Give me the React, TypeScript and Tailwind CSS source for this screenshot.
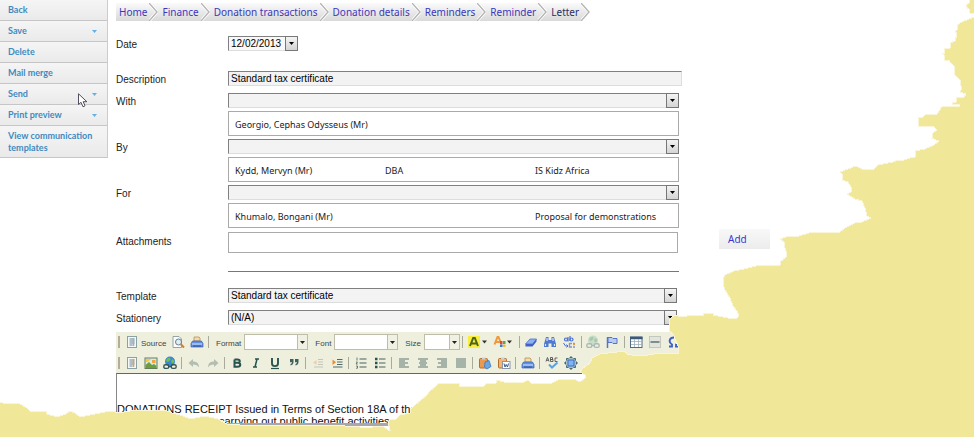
import React from "react";

const menu = [
  { label: "Back", more: false },
  { label: "Save", more: true },
  { label: "Delete", more: false },
  { label: "Mail merge", more: false },
  { label: "Send", more: true },
  { label: "Print preview", more: true },
];

const trail = ["Home", "Finance", "Donation transactions", "Donation details", "Reminders", "Reminder"];

function Chevron({ last = false }: { last?: boolean }) {
  return (
    <svg className="mx-0.5 block h-[18px] w-[9px] shrink-0 last:mr-0" viewBox="0 0 9 18" aria-hidden="true">
      {last && <path d="M0 0 L8 9 L0 18 H9 V0Z" fill="#fff" />}
      <path d="M0 0 L8 9 L0 18" fill="none" stroke="#fff" strokeWidth="3" />
      <path d="M0 0 L8 9 L0 18" fill="none" stroke="#b4b4b4" strokeWidth="1.4" />
    </svg>
  );
}

function ArrowBox() {
  return (
    <span className="pointer-events-none absolute inset-y-0 right-0 flex w-[13px] items-center justify-center border border-[#777] bg-linear-to-b from-[#f4f4f4] to-[#d4d4d4]">
      <svg className="h-[3px] w-[5px]" viewBox="0 0 5 3" aria-hidden="true">
        <path d="M0 0H5L2.5 3Z" fill="#000" />
      </svg>
    </span>
  );
}

function Picker({ id, value = "" }: { id: string; value?: string }) {
  return (
    <span className="relative block h-[15px] w-full">
      <select
        id={id}
        defaultValue={value}
        className="block h-[15px] w-full appearance-none border border-t-[#808080] border-r-[#ccc] border-b-[#ddd] border-l-[#808080] bg-[#f3f3f3] pl-0.5 text-[10px] leading-[13px] text-black"
      >
        <option value={value}>{value}</option>
      </select>
      <ArrowBox />
    </span>
  );
}

function Field({ id, label, children }: { id: string; label: string; children: React.ReactNode }) {
  return (
    <div className="flex">
      <label htmlFor={id} className="w-28 shrink-0 pt-0.5 text-[10px] leading-[13px] text-[#222]">
        {label}
      </label>
      {children}
    </div>
  );
}

function PersonRow({ cells }: { cells: string[] }) {
  return (
    <div className="mt-[3px] grid h-[25px] grid-cols-[150px_150px_1fr] items-center border border-[#aaa] bg-white pt-0.5 pl-1.5 font-['Noto_Sans',sans-serif] text-[9px] leading-3 text-[#222]">
      {cells.map((cell, i) => (
        <span key={i}>{cell}</span>
      ))}
    </div>
  );
}

function PeopleField({ id, label, cells }: { id: string; label: string; cells: string[] }) {
  return (
    <Field id={id} label={label}>
      <div className="max-w-[451px] flex-1">
        <Picker id={id} />
        <PersonRow cells={cells} />
      </div>
    </Field>
  );
}

function Tool({ label, children, wide = false }: { label: string; children: React.ReactNode; wide?: boolean }) {
  return (
    <button
      type="button"
      aria-label={label}
      className={wide ? "flex h-5 w-[26px] shrink-0 items-center justify-center" : "flex h-5 w-[19px] shrink-0 items-center justify-center"}
    >
      <svg className={wide ? "h-3.5 w-[22px]" : "h-3.5 w-3.5"} viewBox={wide ? "0 0 22 14" : "0 0 14 14"} fill="none">
        {children}
      </svg>
    </button>
  );
}

function Sep() {
  return <span className="mx-0.5 h-3 w-px shrink-0 bg-[#a9a99c]" />;
}

function Grip() {
  return <span className="mr-0.5 ml-0.5 h-3 w-0.5 shrink-0 bg-[#b5ad98]" />;
}

function Combo({ label, width }: { label: string; width: string }) {
  return (
    <label className="flex items-center gap-[3px] pl-[5px] text-[8px] leading-3 text-[#444]">
      <span className="pt-1">{label}</span>
      <span className={"relative block h-4 " + width}>
        <select className="block h-4 w-full appearance-none border border-[#bdbda9] bg-white" />
        <span className="pointer-events-none absolute inset-y-0 right-0 flex w-[11px] items-center justify-center border border-[#bdbda9] bg-[#f1f1e3]">
          <svg className="h-[3px] w-[5px]" viewBox="0 0 5 3" aria-hidden="true">
            <path d="M0 0H5L2.5 3Z" fill="#222" />
          </svg>
        </span>
      </span>
    </label>
  );
}

function Printer() {
  return (
    <>
      <path d="M4 6V2H9L10 3V6Z" fill="#f2dcae" stroke="#b78f52" strokeWidth=".8" />
      <path d="M2.500 6H11.500L13 8.500V12H1V8.500Z" fill="#5f8fe0" stroke="#3963b5" strokeWidth=".7" />
      <path d="M2 9H12" stroke="#dbe8ff" />
      <path d="M3 11H11" stroke="#2e4f9e" />
    </>
  );
}

function Doc({ accent }: { accent: string }) {
  return (
    <>
      <rect x="2.5" y="1.5" width="9" height="11" fill="#f4f8f8" stroke="#8ba1a3" />
      <path d="M4.5 4H9.5M4.5 6H9.5M4.5 8H9.5M4.5 10H7.5" stroke="#5c7c88" strokeWidth=".9" />
      <path d="M8.5 3V11" stroke={accent} strokeWidth="1.5" />
    </>
  );
}

function Globe({ tone, land, chain }: { tone: string; land: string; chain: string }) {
  return (
    <>
      <circle cx="7" cy="5.5" r="5" fill={tone} />
      <path d="M4 2.5L7 1.5L7.5 4L5 6L3 5ZM9 3L11.5 5L10 7.5L8 6Z" fill={land} />
      <rect x="0.8" y="8.8" width="5" height="3.6" rx="1.6" stroke={chain} strokeWidth="1.4" />
      <rect x="8.2" y="8.8" width="5" height="3.6" rx="1.6" stroke={chain} strokeWidth="1.4" />
      <path d="M5 10.6H9" stroke={chain} strokeWidth="1.4" />
    </>
  );
}

function Toolbar() {
  return (
    <div className="bg-[#efefde]" role="toolbar" aria-label="Editor">
      <div className="flex h-5 items-center overflow-hidden">
        <Grip />
        <button type="button" className="flex h-5 shrink-0 items-center text-[8px] leading-3 text-[#444]">
          <span className="flex w-[19px] justify-center">
            <svg className="h-3.5 w-3.5" viewBox="0 0 14 14" fill="none" aria-hidden="true">
              <Doc accent="#9db4b8" />
            </svg>
          </span>
          <span className="w-[27px] pt-1 text-left">Source</span>
        </button>
        <Tool label="Preview">
          <path d="M2 1.5H8L10.5 4V12.5H2Z" fill="#fbfdfd" stroke="#93a5a8" />
          <circle cx="7.5" cy="7" r="3" fill="#dfeef5" stroke="#68808c" />
          <path d="M9.8 9.3L13 12.5" stroke="#c9803a" strokeWidth="2" />
        </Tool>
        <Tool label="Print">
          <Printer />
        </Tool>
        <Sep />
        <Combo label="Format" width="w-16" />
        <span className="w-0.5 shrink-0" />
        <Combo label="Font" width="w-16" />
        <span className="w-0.5 shrink-0" />
        <Combo label="Size" width="w-9" />
        <Sep />
        <Tool label="Background colour" wide>
          <rect x="1" y="1" width="12" height="12" fill="#f8ee3c" />
          <path d="M3 11L6.2 3H7.8L11 11M4.5 8.5H9.5" stroke="#4d6321" strokeWidth="2" />
          <path d="M15 5.5H20L17.5 8.5Z" fill="#333" />
        </Tool>
        <Tool label="Text colour" wide>
          <path d="M1.5 9.5L4.5 2H5.5L8.5 9.5M3 7H7" stroke="#f0983c" strokeWidth="2" />
          <rect x="7" y="6" width="2.5" height="3" fill="#de4937" />
          <rect x="10" y="6" width="2.5" height="3" fill="#55a843" />
          <rect x="7" y="9.5" width="2.5" height="2.5" fill="#3e72cf" />
          <rect x="10" y="9.5" width="2.5" height="2.5" fill="#e9bd2d" />
          <path d="M14 5.5H19L16.5 8.5Z" fill="#333" />
        </Tool>
        <Sep />
        <Tool label="Remove format">
          <path d="M1.5 9L6 4H12.5L8.5 9Z" fill="#8fb1f2" stroke="#4a6fcf" strokeWidth=".8" />
          <path d="M1.5 9H8.5L12.5 4V6.5L8.5 11.5H1.5Z" fill="#3d63c8" />
        </Tool>
        <Tool label="Find">
          <path d="M3 2H5.5V5H8.5V2H11L13 9V12H8.5V8.500H5.5V12H1V9Z" fill="#5179cf" />
          <path d="M2.5 9V11M4 3V6M10 3V6M11.5 9V11" stroke="#dbe6fc" strokeWidth="1.2" />
        </Tool>
        <Tool label="Replace">
          <circle cx="4" cy="4.5" r="1.5" stroke="#4a6fcf" strokeWidth="1.2" />
          <path d="M6 2V6.5M8 1V6" stroke="#4a6fcf" strokeWidth="1.2" />
          <circle cx="9.5" cy="4.5" r="1.5" stroke="#4a6fcf" strokeWidth="1.2" />
          <path d="M1.5 8L3.5 11H6M4.5 9.5L6 11L4.5 12.5" stroke="#4a6fcf" />
          <path d="M10 8.5H7.5V12H10M11 8.5H13M11 12H13" stroke="#8098d2" strokeWidth="1.4" />
          <path d="M11 9.5H13" stroke="#ec9a3b" strokeWidth="1.5" />
        </Tool>
        <Sep />
        <Tool label="Unlink">
          <Globe tone="#c6dccd" land="#a9c9a5" chain="#adb8b4" />
        </Tool>
        <Tool label="Anchor">
          <path d="M2.5 2V13" stroke="#5674c7" strokeWidth="1.5" />
          <path d="M3 2.5H7L8 3.5H12V8.5H8L7 7.5H3Z" fill="#bacbf3" stroke="#5674c7" />
        </Tool>
        <Sep />
        <Tool label="Table">
          <rect x="1.5" y="2" width="11.5" height="10.5" fill="#fff" stroke="#506b85" />
          <path d="M1 3H13.5" stroke="#395a7c" strokeWidth="2.5" />
          <path d="M2 6.5H13M2 9.5H13M5.5 4V12M9.5 4V12" stroke="#9fb0b8" strokeWidth=".8" />
        </Tool>
        <Tool label="Horizontal line">
          <rect x="1.5" y="1.5" width="11" height="11" fill="#e1e5dc" stroke="#c2c8bf" />
          <path d="M2.5 7H11.5" stroke="#4c5f5f" strokeWidth="1.3" />
        </Tool>
        <Tool label="Special character">
          <path d="M2 11.5H5V9.5C1 7 2.5 2.5 7 2.5S13 7 9 9.5V11.5H12" stroke="#3e61c6" strokeWidth="1.9" />
        </Tool>
      </div>
      <div className="flex h-[21px] items-center overflow-hidden">
        <Grip />
        <Tool label="Templates">
          <Doc accent="#e2a066" />
        </Tool>
        <Tool label="Image">
          <rect x="1" y="2" width="12" height="10.5" fill="#d6eaf0" stroke="#647d5c" />
          <path d="M1.5 12V9L5 6L8 9L10 8L12.5 10V12Z" fill="#6f9d3d" />
          <path d="M2 3H7L4 6H2Z" fill="#f6c844" />
          <rect x="8" y="4" width="3.5" height="3" fill="#efa73e" />
        </Tool>
        <Tool label="Link">
          <Globe tone="#3c86d8" land="#6fc04d" chain="#33565a" />
        </Tool>
        <Sep />
        <Tool label="Undo">
          <path d="M6 3V5.5C10 5.5 12 7.5 12 11.5C10.5 9.3 9 8.5 6 8.5V11L1.5 7Z" fill="#b3bdb2" />
        </Tool>
        <Tool label="Redo">
          <path d="M8 3V5.5C4 5.5 2 7.5 2 11.5C3.5 9.3 5 8.5 8 8.5V11L12.5 7Z" fill="#b3bdb2" />
        </Tool>
        <Sep />
        <Tool label="Bold">
          <path d="M4.5 3.5H7.5C10.5 3.5 10.5 6.8 7.5 6.8H4.5M7.5 6.8C11.2 6.8 11.2 10.7 7.5 10.7H4.5V3.5" stroke="#28534f" strokeWidth="2" />
        </Tool>
        <Tool label="Italic">
          <path d="M6 3H10M4 11H8M8 3L6 11" stroke="#28534f" strokeWidth="1.5" />
        </Tool>
        <Tool label="Underline">
          <path d="M4 2V7.5C4 11 10 11 10 7.5V2" stroke="#28534f" strokeWidth="1.9" />
          <path d="M3 12.5H11" stroke="#28534f" strokeWidth="1.2" />
        </Tool>
        <Tool label="Block quote">
          <path d="M3 3H6.5V6C6.5 8 5.5 9 3.5 9.5V8C4.5 7.5 5 7 5 6.2H3ZM8 3H11.5V6C11.5 8 10.5 9 8.5 9.5V8C9.5 7.5 10 7 10 6.2H8Z" fill="#3d615e" />
        </Tool>
        <Sep />
        <Tool label="Decrease indent">
          <path d="M7 3.5H12M7 6H12M7 8.5H12M3 11H12" stroke="#c1c6bb" />
          <path d="M5.5 4V9L2 6.5Z" fill="#f0cda5" />
        </Tool>
        <Tool label="Increase indent">
          <path d="M7 3.5H12.5M7 6H12.5M7 8.5H12.5M3 11H12.5" stroke="#4f6a68" />
          <path d="M2.5 3.5V9L6 6.2Z" fill="#e98c34" />
        </Tool>
        <Sep />
        <Tool label="Numbered list">
          <path d="M5.5 3H12.5M5.5 7H12.5M5.5 11H12.5" stroke="#47625f" strokeWidth="1.2" />
          <path d="M3 1.5V4.5M2 6H3.5L2 8H3.7M2 10H3.5V12.2H2" stroke="#47625f" strokeWidth=".8" />
        </Tool>
        <Tool label="Bulleted list">
          <path d="M6 3H12.5M6 7H12.5M6 11H12.5" stroke="#47625f" strokeWidth="1.2" />
          <path d="M2 3H4.5M2 7H4.5M2 11H4.5" stroke="#28534f" strokeWidth="2.4" />
        </Tool>
        <Sep />
        <Tool label="Align left">
          <path d="M2 3H12M2 5H8M2 7H11M2 9H8M2 11H12" stroke="#5e7975" strokeWidth="1.2" />
        </Tool>
        <Tool label="Align centre">
          <path d="M2 3H12M4 5H10M3 7H11M4 9H10M2 11H12" stroke="#5e7975" strokeWidth="1.2" />
        </Tool>
        <Tool label="Align right">
          <path d="M2 3H12M6 5H12M3 7H12M6 9H12M2 11H12" stroke="#5e7975" strokeWidth="1.2" />
        </Tool>
        <Tool label="Justify">
          <path d="M2 3H12M2 5H12M2 7H12M2 9H12M2 11H12" stroke="#5e7975" strokeWidth="1.2" />
        </Tool>
        <Sep />
        <Tool label="Paste">
          <rect x="1.5" y="2.5" width="8" height="9.5" rx="1" fill="#e99a4e" stroke="#b56d2c" />
          <path d="M4 1.5H7.5V3.5H4Z" fill="#cbd3d6" />
          <path d="M7 6L11 4.5L13 10.5L9 13L6.5 11Z" fill="#6aa7e2" stroke="#3b79bd" strokeWidth=".8" />
        </Tool>
        <Tool label="Paste from Word">
          <rect x="1.5" y="2.5" width="8" height="9.5" rx="1" fill="#f0b577" stroke="#b56d2c" />
          <path d="M4 1.5H7.5V3.5H4Z" fill="#cbd3d6" />
          <rect x="5.5" y="5.5" width="7.5" height="7" fill="#fff" stroke="#8b97a5" />
          <path d="M7 7.5L8 11L9.2 8.5L10.5 11L11.5 7.5" stroke="#37588f" />
        </Tool>
        <Sep />
        <Tool label="Print page">
          <Printer />
        </Tool>
        <Sep />
        <Tool label="Check spelling">
          <path d="M1 5.5L2.5 1.5L4 5.5M1.5 4.3H3.5M5.5 5.5V1.5H7.5V3.5H5.5H8V5.5H5.5M12.5 2H10V5.5H12.5" stroke="#555" strokeWidth=".9" />
          <path d="M4 8.5L7 11.5L12.5 6.5" stroke="#5aa3de" strokeWidth="2" />
        </Tool>
        <Tool label="Maximise">
          <rect x="2" y="2" width="10" height="10" rx="2" fill="#a9bfc2" />
          <path d="M7 0L9 2H5ZM7 14L9 12H5ZM0 7L2 5V9ZM14 7L12 5V9Z" fill="#456a70" />
          <path d="M2.500 4.500V2.500H4.500M9.500 2.500H11.500V4.500M11.500 9.500V11.500H9.500M4.500 11.500H2.500V9.500" stroke="#456a70" />
          <rect x="4" y="4" width="6" height="6" fill="#7db4f5" stroke="#3a6ec4" />
        </Tool>
      </div>
    </div>
  );
}

const tear =
  "M970 -2V0L969 3L966 5V7L969 9L970 13L974 14V17L969 19L962 22L957 25V30L955 31L957 34L955 41L950 43V48L944 49V53H942L944 55V60H949L950 62L954 66V74L957 77L960 80V84L962 88L960 92L966 94L964 97H957L956 102H952V104H959V106H953L944 106L940 108V110L937 114L925 115L923 117H918V126L934 127L937 130L933 133L932 138H931L939 141L934 145L925 149L915 151V157L910 158L904 160H898L893 162L878 165L874 169H862L856 166L848 169L840 172L842 174V180L848 182L851 187V192L847 194L855 199L862 201L865 208L867 216L871 218L862 222H857L845 228L840 232L809 233L799 236L786 237L780 239L784 242V245L786 251V257L780 262V265L756 266L744 269L734 271L725 275L723 279V284L725 290L730 298L733 306L737 311L739 316L737 318H728L713 315V313H703V315L692 315L682 317L675 315L671 318L669 320V331L673 334L676 341L678 346V353H660L648 355L632 355L627 354L625 351L600 354L592 358L590 363L582 369L580 372L585 375V378L580 382L574 379H566L558 380L552 383H531L528 380L522 383L504 382L497 380L496 383L486 384L484 386H459V383H439L436 386L430 391L427 395L421 400L415 405L411 409L410 413L400 415L396 419H390L388 423L390 430H388L383 426H375L370 428L360 427L345 426L330 425H290L270 425L255 425L240 425L227 424L218 419L205 416L195 418H188L180 415L172 413L165 410H145L130 411L118 413L113 411L105 412L95 414L85 416L80 417L75 413L70 411L66 414L57 417L47 414L46 411H30L27 408L20 404L3 403L-2 402V439H976V-2Z";

export default function App() {
  return (
    <div className="relative flex min-h-screen items-start overflow-hidden bg-white font-['Liberation_Sans',Arial,sans-serif]">
      <nav aria-label="Actions" className="w-[108px] shrink-0 border-r border-[#ccc] font-[Lato,sans-serif] text-[9px] leading-3 font-bold text-[#3e8bbf]">
        {menu.map((item) => (
          <button
            key={item.label}
            type="button"
            className="flex h-[21px] w-full items-center justify-between border-b border-[#c6c6c6] bg-linear-to-b from-[#f5f5f5] to-[#eaeaea] pr-2.5 pl-2 text-left"
          >
            {item.label}
            {item.more && (
              <svg className="h-[3px] w-[5px]" viewBox="0 0 5 3" aria-hidden="true">
                <path d="M0 0H5L2.5 3Z" fill="#64b0e4" />
              </svg>
            )}
          </button>
        ))}
        <button type="button" className="flex h-8 w-full items-center border-b border-[#c6c6c6] bg-linear-to-b from-[#f5f5f5] to-[#eaeaea] pl-2 text-left">
          View communication templates
        </button>
      </nav>

      <main className="min-w-0 flex-1 pt-[3px] pl-2">
        <nav aria-label="Breadcrumb" className="flex h-[18px] w-fit items-center bg-linear-to-b from-[#fafafa] to-[#d9d9d9] pl-[3px] font-['Noto_Sans',sans-serif] text-[10px] leading-[18px]">
          {trail.map((name) => (
            <React.Fragment key={name}>
              <a href="#" className="text-[#3b37bd]">
                {name}
              </a>
              <Chevron />
              <span className="w-0.5" />
            </React.Fragment>
          ))}
          <span className="text-[#1f2f66]">Letter</span>
          <Chevron last />
        </nav>

        <div className="mt-[15px]">
          <Field id="date" label="Date">
            <span className="relative block h-[15px] w-[70px]">
              <input
                id="date"
                defaultValue="12/02/2013"
                className="block h-[15px] w-full border border-t-[#808080] border-r-[#ccc] border-b-[#ddd] border-l-[#808080] bg-[#f8f8f8] pl-0.5 text-[10px] leading-[13px] text-black"
              />
              <ArrowBox />
            </span>
          </Field>
        </div>

        <div className="mt-5 flex flex-col gap-[7px]">
          <Field id="description" label="Description">
            <input
              id="description"
              defaultValue="Standard tax certificate"
              className="block h-[15px] max-w-[454px] min-w-0 flex-1 border border-t-[#808080] border-r-[#ddd] border-b-[#ddd] border-l-[#808080] bg-[#f3f3f3] pl-0.5 text-[10px] leading-[13px] text-black"
            />
          </Field>
          <div className="flex flex-col gap-[3px]">
            <PeopleField id="with" label="With" cells={["Georgio, Cephas Odysseus (Mr)"]} />
            <PeopleField id="by" label="By" cells={["Kydd, Mervyn (Mr)", "DBA", "IS Kidz Africa"]} />
            <PeopleField id="for" label="For" cells={["Khumalo, Bongani (Mr)", "", "Proposal for demonstrations"]} />
          </div>
        </div>

        <div className="mt-px flex items-start">
          <label htmlFor="attachments" className="w-28 shrink-0 pt-1.5 text-[10px] leading-[13px] text-[#222]">
            Attachments
          </label>
          <input id="attachments" className="mt-[3px] block h-[21px] max-w-[450px] min-w-0 flex-1 border border-[#aaa] bg-white" />
          <button
            type="button"
            className="ml-[41px] h-5 w-[51px] bg-linear-to-b from-[#f8f8f8] to-[#ececec] pl-[9px] text-left font-['Noto_Sans',sans-serif] text-[10px] text-[#3b37d0]"
          >
            Add
          </button>
        </div>
        <hr className="mt-[18px] ml-28 max-w-[451px] border-t border-[#777]" />

        <div className="mt-4 flex flex-col gap-[7px]">
          <Field id="template" label="Template">
            <span className="block max-w-[449px] flex-1">
              <Picker id="template" value="Standard tax certificate" />
            </span>
          </Field>
          <Field id="stationery" label="Stationery">
            <span className="block max-w-[449px] flex-1">
              <Picker id="stationery" value="(N/A)" />
            </span>
          </Field>
        </div>

        <section className="mt-[7px] max-w-[563px]">
          <Toolbar />
          <div
            contentEditable
            suppressContentEditableWarning
            role="textbox"
            aria-label="Letter body"
            className="border-t border-l border-t-[#666] border-l-[#888] pt-[29px] text-[11px] leading-3 text-[#111]"
          >
            <p>DONATIONS RECEIPT Issued in Terms of Section 18A of the</p>
            <p className="pl-[102px]">carrying out public benefit activities</p>
          </div>
        </section>
      </main>

      <svg className="pointer-events-none absolute inset-0 h-full w-full" viewBox="0 0 974 437" preserveAspectRatio="none" aria-hidden="true">
        <path d="M222 423H389V426H222Z" fill="#a8a8a8" />
        <path d={tear} fill="#f0e799" stroke="#f9f5d6" strokeWidth="1" shapeRendering="crispEdges" />
      </svg>

      <svg className="pointer-events-none absolute top-[93px] left-[78px] h-[15px] w-[10px]" viewBox="0 0 10 15" aria-hidden="true">
        <path d="M.5 .8V11.5L3 9.3L5 13.8L7 12.8L5.2 8.7H8.8Z" fill="#fff" stroke="#3c3c50" strokeWidth=".9" />
      </svg>
    </div>
  );
}
